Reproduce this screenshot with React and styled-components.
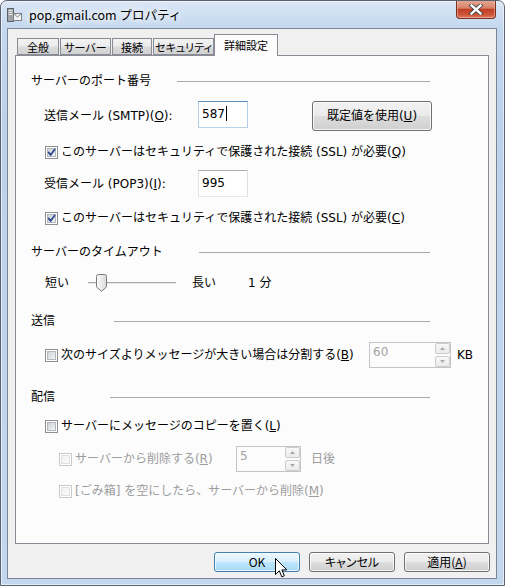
import React from 'react';
import styled, { createGlobalStyle } from 'styled-components';

const GlobalStyle = createGlobalStyle`
  html, body { margin: 0; padding: 0; background: #ffffff; }
  body {
    font-family: "DejaVu Sans", "Noto Sans CJK JP", sans-serif;
    font-size: 12px;
    color: #000;
  }
  * { box-sizing: border-box; }
`;

const Window = styled.div`
  width: 505px;
  height: 586px;
  border: 1px solid #5b6370;
  border-radius: 7px 7px 0 0;
  background: linear-gradient(180deg, #dae7f6 0px, #c4d8ef 26px, #bcd2ec 120px, #c3d8ee 100%);
  box-shadow: inset 0 0 0 1px rgba(255, 255, 255, 0.55);
  display: flex;
  flex-direction: column;
  overflow: hidden;
`;

const TitleBar = styled.div`
  height: 27px;
  display: flex;
  align-items: center;
  padding-left: 5px;
  flex: none;
`;

const TitleText = styled.span`
  margin-left: 7px;
  font-family: "Noto Sans CJK JP", sans-serif;
  font-size: 12.5px;
  line-height: 16px;
  color: #000;
  text-shadow: 0 0 6px #fff, 0 0 10px #fff, 0 0 14px rgba(255, 255, 255, 0.9);
  margin-top: 1px;
`;

const CloseButton = styled.div`
  margin-left: auto;
  margin-right: 8px;
  align-self: flex-start;
  margin-top: -1px;
  width: 40px;
  height: 19px;
  border: 1px solid #7a2c1e;
  border-top: none;
  border-radius: 0 0 4px 4px;
  background: linear-gradient(180deg, #e8ac9a 0%, #d98068 45%, #c23e24 52%, #cb5336 80%, #dc7c60 100%);
  box-shadow: inset 0 0 0 1px rgba(255, 220, 200, 0.45);
  display: flex;
  align-items: center;
  justify-content: center;
`;

const Client = styled.div`
  flex: 1;
  margin: 0 7px 6px 6px;
  border: 1px solid #7b8595;
  background: #f0f0f0;
  padding: 6px 7px 0 7px;
  display: flex;
  flex-direction: column;
`;

const TabRow = styled.div`
  height: 20px;
  display: flex;
  align-items: flex-end;
  gap: 1px;
  padding-left: 2px;
`;

const Tab = styled.div`
  width: ${p => p.$w}px;
  height: ${p => (p.$active ? 22 : 17)}px;
  margin-bottom: ${p => (p.$active ? -1 : 0)}px;
  margin-left: ${p => (p.$active ? -1 : 0)}px;
  position: relative;
  z-index: ${p => (p.$active ? 2 : 0)};
  border: 1px solid #898c95;
  border-bottom: ${p => (p.$active ? 'none' : '1px solid #898c95')};
  background: ${p =>
    p.$active
      ? '#fcfcfc'
      : 'linear-gradient(180deg, #f3f3f3 0%, #ebebeb 48%, #dcdcdc 52%, #d2d2d2 100%)'};
  display: flex;
  align-items: center;
  justify-content: center;
  font-family: "Noto Sans CJK JP", sans-serif;
  font-size: 11px;
  font-feature-settings: "palt";
  line-height: 15px;
  padding-top: ${p => (p.$active ? 0 : 1)}px;
  white-space: nowrap;
`;

const Panel = styled.div`
  position: relative;
  z-index: 1;
  width: 474px;
  height: 489px;
  border: 1px solid #898c95;
  background: #fcfcfc;
  padding-left: 15px;
  display: flex;
  flex-direction: column;
`;

const Row = styled.div`
  display: flex;
  align-items: ${p => p.$align || 'center'};
  height: ${p => p.$h}px;
  margin-top: ${p => p.$mt}px;
  margin-left: ${p => p.$ml || 0}px;
  flex: none;
`;

const Header = styled(Row)`
  width: 399px;
`;

const HeaderText = styled.span`
  width: ${p => p.$w}px;
  flex: none;
  line-height: 16px;
  white-space: nowrap;
`;

const Rule = styled.div`
  flex: 1;
  height: 1px;
  background: #a9a9a9;
`;

const Text = styled.span`
  width: ${p => (p.$w ? `${p.$w}px` : 'auto')};
  flex: none;
  line-height: ${p => p.$lh || 16}px;
  margin-left: ${p => p.$ml || 0}px;
  color: ${p => (p.$disabled ? '#9d9d9d' : '#000')};
  white-space: nowrap;
`;

const CheckLabel = styled.label`
  display: flex;
  align-items: center;
  gap: 3px;
  width: ${p => (p.$w ? `${p.$w}px` : 'auto')};
  flex: none;
  line-height: 16px;
  color: ${p => (p.$disabled ? '#9d9d9d' : '#000')};
  white-space: nowrap;
`;

const TextBox = styled.div`
  width: ${p => p.$w}px;
  height: 27px;
  flex: none;
  border: 1px solid;
  border-color: ${p => (p.$focus ? '#5a8fbb #b3cde6 #b9d4ea #b3cde6' : '#abadb3 #dbdfe6 #e3e9ef #e2e3ea')};
  background: #fff;
  padding-left: 3px;
  display: flex;
  align-items: center;
  line-height: 16px;
  padding-bottom: 2px;
`;

const Caret = styled.span`
  display: inline-block;
  width: 1px;
  height: 15px;
  background: #000;
  margin-left: 1px;
`;

const PushButton = styled.div`
  position: relative;
  width: ${p => p.$w}px;
  height: ${p => p.$h}px;
  margin-left: ${p => p.$ml || 0}px;
  flex: none;
  border: 1px solid ${p => (p.$hot ? '#3c7fb1' : '#707070')};
  border-radius: 3px;
  background: ${p =>
    p.$hot
      ? 'linear-gradient(180deg, #eaf6fd 0%, #d9f0fc 48%, #bee6fd 52%, #a7d9f5 100%)'
      : 'linear-gradient(180deg, #f2f2f2 0%, #ebebeb 48%, #dddddd 52%, #cfcfcf 100%)'};
  box-shadow: inset 0 0 0 1px rgba(255, 255, 255, 0.75);
  display: flex;
  align-items: center;
  justify-content: center;
  line-height: 16px;
  white-space: nowrap;
  font-family: ${p => (p.$narrow ? '"Noto Sans CJK JP", sans-serif' : 'inherit')};
  font-feature-settings: ${p => (p.$narrow ? '"palt"' : 'normal')};
`;

const Spinner = styled.div`
  width: ${p => p.$w}px;
  height: 26px;
  flex: none;
  border: 1px solid #c2c4c8;
  background: #fcfcfc;
  display: flex;
  justify-content: space-between;
  padding-left: 3px;
  color: #a3a3a3;
`;

const SpinValue = styled.span`
  line-height: 18px;
`;

const SpinCol = styled.div`
  display: flex;
  flex-direction: column;
  gap: 2px;
  width: 15px;
`;

const SpinBtn = styled.div`
  height: 11px;
  border: 1px solid #cdcdcd;
  border-radius: 2px;
  background: linear-gradient(180deg, #f8f8f8 0%, #ebebeb 100%);
  display: flex;
  align-items: center;
  justify-content: center;
`;

const Slider = styled.div`
  position: relative;
  width: 88px;
  height: 18px;
  flex: none;
`;

const Track = styled.div`
  position: absolute;
  left: 0;
  right: 0;
  top: 8px;
  height: 2px;
  border-top: 1px solid #a8a8a8;
  border-bottom: 1px solid #e6e6e6;
`;

const Thumb = styled.svg`
  position: absolute;
  left: 8px;
  top: 0;
`;

const ButtonRow = styled.div`
  display: flex;
  justify-content: flex-end;
  gap: 9px;
  margin-top: 8px;
  margin-right: -1px;
`;

const Cursor = styled.svg`
  position: absolute;
  left: 60px;
  top: 5px;
  z-index: 3;
`;

function CheckBox({ checked, disabled }) {
  const outer = disabled ? '#c9c9c9' : '#8e8f8f';
  const innerStroke = disabled ? '#e0e0e0' : '#b4b8be';
  const id = disabled ? 'cbd' : 'cbn';
  return (
    <svg width="13" height="13" viewBox="0 0 13 13" style={{ flex: 'none' }}>
      <defs>
        <linearGradient id={id} x1="0" y1="0" x2="1" y2="1">
          <stop offset="0" stopColor={disabled ? '#f0f0f0' : '#cbcfd5'} />
          <stop offset="1" stopColor={disabled ? '#fbfbfb' : '#f7f7f7'} />
        </linearGradient>
      </defs>
      <rect x="0.5" y="0.5" width="12" height="12" fill="#fff" stroke={outer} />
      <rect x="2.5" y="2.5" width="8" height="8" fill={`url(#${id})`} stroke={innerStroke} />
      {checked && (
        <path d="M3.6 6.4 L5.6 9 L9.6 3.4" fill="none" stroke="#2f4a8f" strokeWidth="1.8" strokeLinecap="round" strokeLinejoin="round" />
      )}
    </svg>
  );
}

function Arrow({ up }) {
  return (
    <svg width="5" height="3" viewBox="0 0 5 3">
      <path d={up ? 'M0 3 L2.5 0 L5 3 Z' : 'M0 0 L2.5 3 L5 0 Z'} fill="#a9a9a9" />
    </svg>
  );
}

function SpinBox({ w, value }) {
  return (
    <Spinner $w={w}>
      <SpinValue>{value}</SpinValue>
      <SpinCol>
        <SpinBtn><Arrow up /></SpinBtn>
        <SpinBtn><Arrow /></SpinBtn>
      </SpinCol>
    </Spinner>
  );
}

function AppIcon() {
  return (
    <svg width="16" height="16" viewBox="0 0 16 16" style={{ flex: 'none' }}>
      <rect x="1.5" y="1.5" width="6" height="13" fill="#9ea3a8" stroke="#5e6368" />
      <rect x="2.5" y="3" width="4" height="1" fill="#e8e8e8" />
      <rect x="2.5" y="5" width="4" height="1" fill="#e8e8e8" />
      <rect x="2.5" y="7" width="4" height="1" fill="#e8e8e8" />
      <rect x="7.5" y="6.5" width="8" height="7" fill="#f4f4f4" stroke="#7b7f84" />
      <path d="M7.5 6.5 L11.5 10 L15.5 6.5" fill="none" stroke="#7b7f84" />
    </svg>
  );
}

function CloseGlyph() {
  return (
    <svg width="14" height="11" viewBox="0 0 14 11">
      <path d="M2.5 1.5 L11.5 9.5 M11.5 1.5 L2.5 9.5" stroke="#3b3b3b" strokeWidth="4.2" strokeLinecap="square" />
      <path d="M2.5 1.5 L11.5 9.5 M11.5 1.5 L2.5 9.5" stroke="#ffffff" strokeWidth="2.4" strokeLinecap="square" />
    </svg>
  );
}

function Check({ checked, disabled, w, children }) {
  return (
    <CheckLabel $w={w} $disabled={disabled}>
      <CheckBox checked={checked} disabled={disabled} />
      <span>{children}</span>
    </CheckLabel>
  );
}

export default function App() {
  return (
    <>
      <GlobalStyle />
      <Window>
        <TitleBar>
          <AppIcon />
          <TitleText>pop.gmail.com プロパティ</TitleText>
          <CloseButton><CloseGlyph /></CloseButton>
        </TitleBar>
        <Client>
          <TabRow>
            <Tab $w={42}>全般</Tab>
            <Tab $w={51}>サーバー</Tab>
            <Tab $w={40}>接続</Tab>
            <Tab $w={61}>セキュリティ</Tab>
            <Tab $w={64} $active>詳細設定</Tab>
          </TabRow>
          <Panel>
            <Header $h={16} $mt={17}>
              <HeaderText $w={146}>サーバーのポート番号</HeaderText>
              <Rule />
            </Header>

            <Row $h={30} $mt={12} $ml={13} $align="flex-start">
              <Text $w={154} $lh={30}>送信メール (SMTP)(<u>O</u>):</Text>
              <TextBox $w={50} $focus>587<Caret /></TextBox>
              <PushButton $w={120} $h={30} $ml={64}>既定値を使用(<u>U</u>)</PushButton>
            </Row>

            <Row $h={16} $mt={13} $ml={14}>
              <Check checked>このサーバーはセキュリティで保護された接続 (SSL) が必要(<u>Q</u>)</Check>
            </Row>

            <Row $h={27} $mt={10} $ml={13}>
              <Text $w={154}>受信メール (POP3)(<u>I</u>):</Text>
              <TextBox $w={50}>995</TextBox>
            </Row>

            <Row $h={16} $mt={13} $ml={14}>
              <Check checked>このサーバーはセキュリティで保護された接続 (SSL) が必要(<u>C</u>)</Check>
            </Row>

            <Header $h={16} $mt={18}>
              <HeaderText $w={168}>サーバーのタイムアウト</HeaderText>
              <Rule />
            </Header>

            <Row $h={18} $mt={14} $ml={14}>
              <Text $w={43}>短い</Text>
              <Slider>
                <Track />
                <Thumb width="11" height="18" viewBox="0 0 11 18">
                  <defs>
                    <linearGradient id="thumbg" x1="0" y1="0" x2="1" y2="0">
                      <stop offset="0" stopColor="#fbfbfb" />
                      <stop offset="1" stopColor="#d9d9d9" />
                    </linearGradient>
                  </defs>
                  <path d="M0.5 2.5 Q0.5 0.5 2.5 0.5 H8.5 Q10.5 0.5 10.5 2.5 V13 L5.5 17.3 L0.5 13 Z" fill="url(#thumbg)" stroke="#7c7c7c" />
                </Thumb>
              </Slider>
              <Text $w={56} $ml={16}>長い</Text>
              <Text>1 分</Text>
            </Row>

            <Header $h={16} $mt={21}>
              <HeaderText $w={83}>送信</HeaderText>
              <Rule />
            </Header>

            <Row $h={26} $mt={13} $ml={14}>
              <Check w={324}>次のサイズよりメッセージが大きい場合は分割する(<u>B</u>)</Check>
              <SpinBox w={82} value="60" />
              <Text $ml={6}>KB</Text>
            </Row>

            <Header $h={16} $mt={21}>
              <HeaderText $w={79}>配信</HeaderText>
              <Rule />
            </Header>

            <Row $h={16} $mt={13} $ml={14}>
              <Check>サーバーにメッセージのコピーを置く(<u>L</u>)</Check>
            </Row>

            <Row $h={26} $mt={12} $ml={28}>
              <Check w={177} disabled>サーバーから削除する(<u>R</u>)</Check>
              <SpinBox w={65} value="5" />
              <Text $ml={10} $disabled>日後</Text>
            </Row>

            <Row $h={16} $mt={11} $ml={28}>
              <Check disabled>[ごみ箱] を空にしたら、サーバーから削除(<u>M</u>)</Check>
            </Row>
          </Panel>

          <ButtonRow>
            <PushButton $w={86} $h={20} $hot $narrow>
              OK
              <Cursor width="13" height="21" viewBox="0 0 13 21">
                <path d="M0.5 0.5 L0.5 16.5 L4.3 12.8 L6.8 18.8 L9.3 17.8 L6.9 11.9 L11.8 11.9 Z" fill="#fff" stroke="#000" strokeLinejoin="miter" />
              </Cursor>
            </PushButton>
            <PushButton $w={86} $h={20} $narrow>キャンセル</PushButton>
            <PushButton $w={86} $h={20} $narrow>適用(<u>A</u>)</PushButton>
          </ButtonRow>
        </Client>
      </Window>
    </>
  );
}
